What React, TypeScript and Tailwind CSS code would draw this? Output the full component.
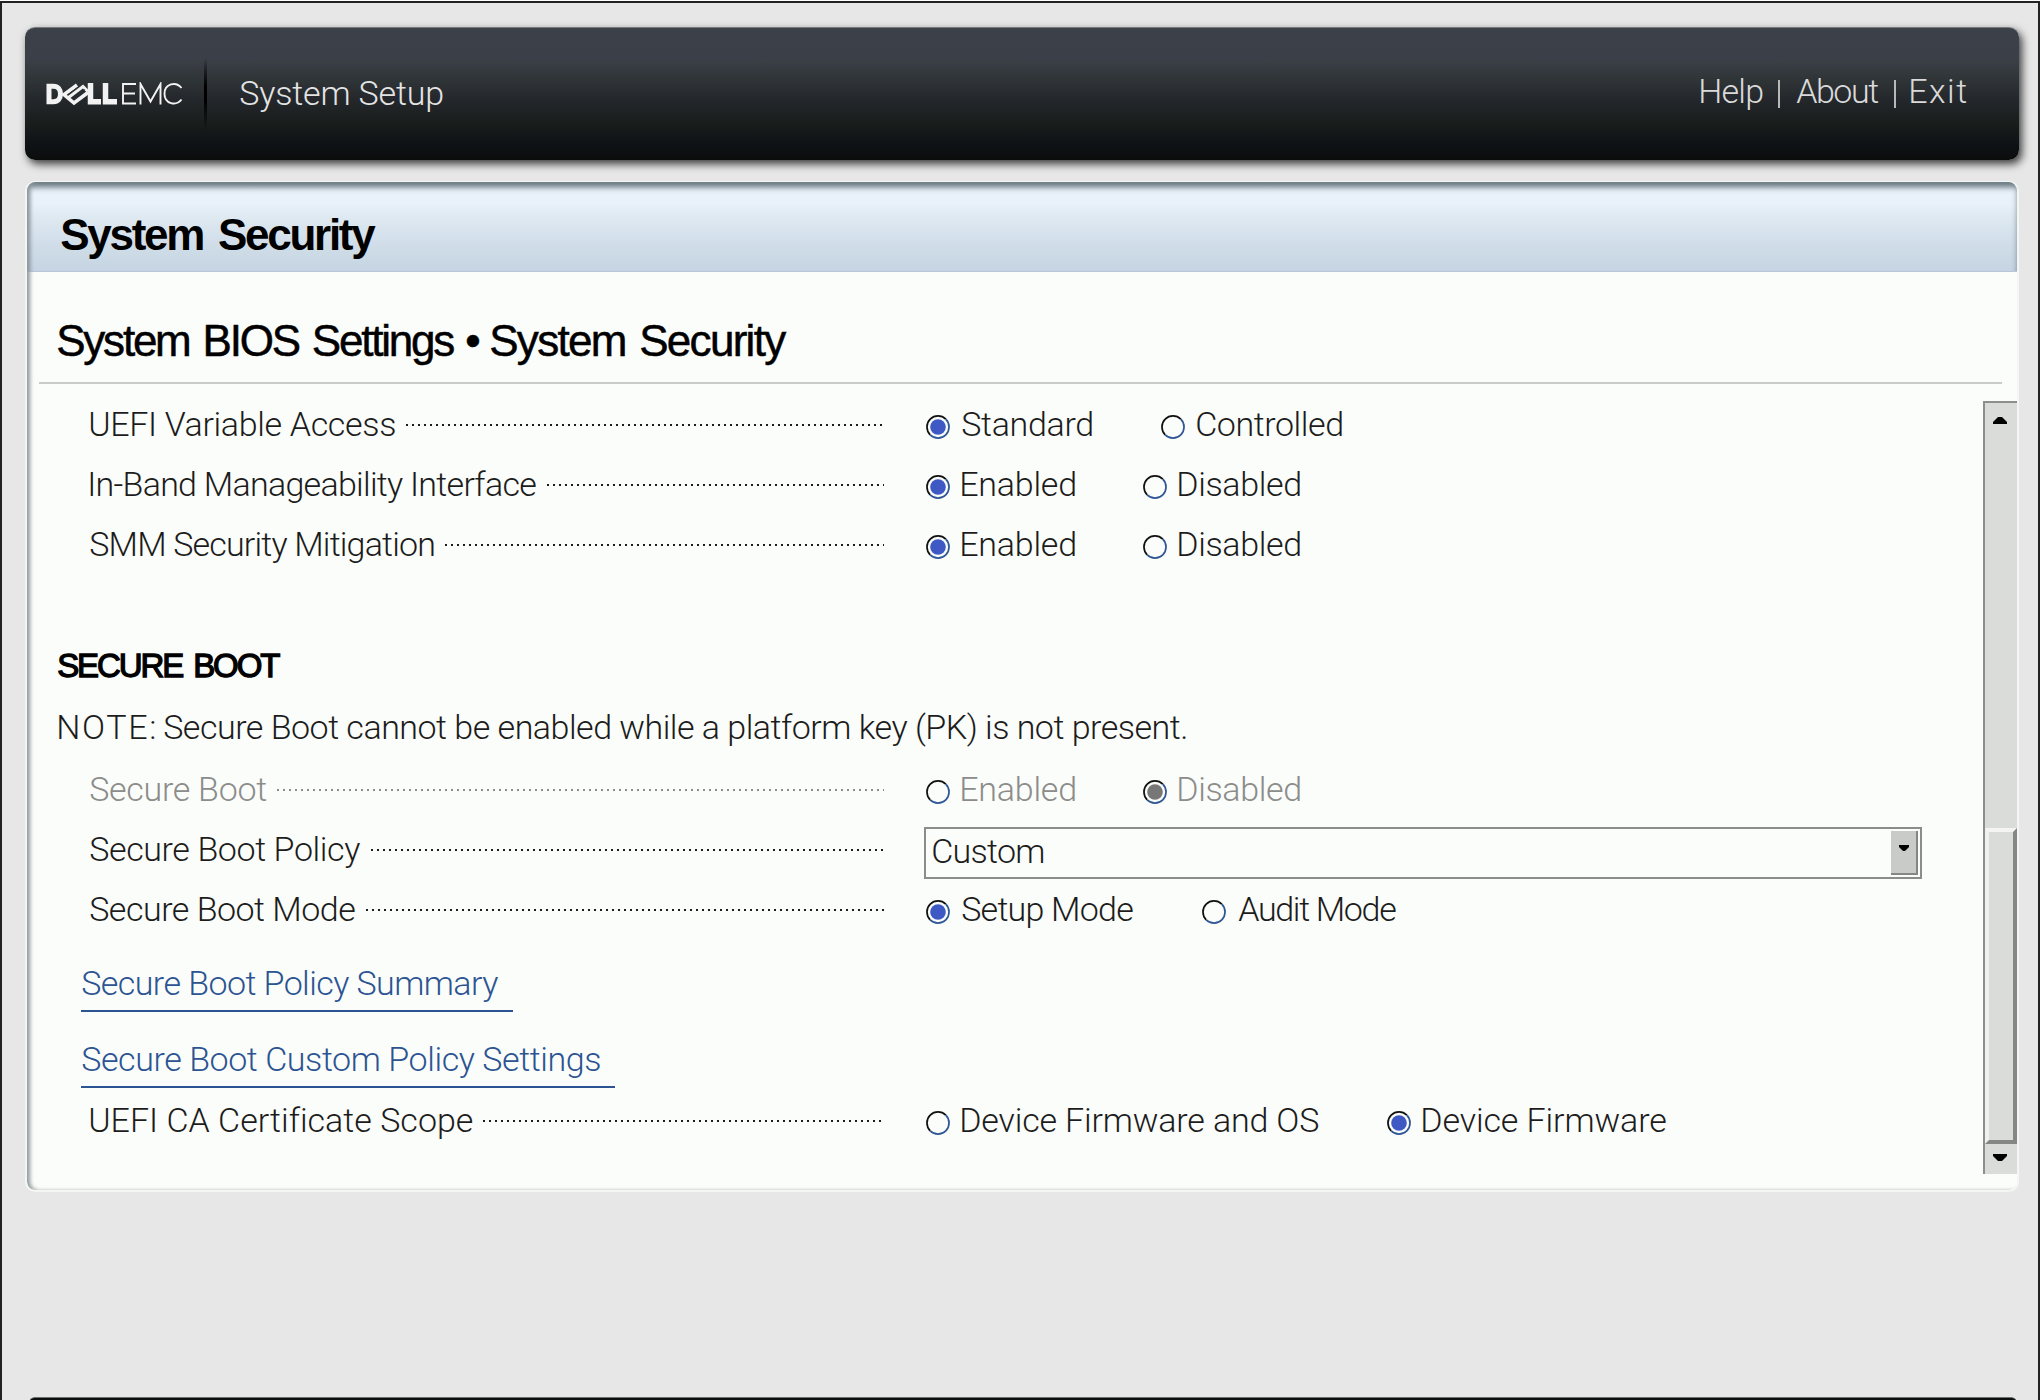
import { useLayoutEffect, useRef } from "react";

type FitProps = { children: string; w: number; className?: string };

/** Text whose letter spacing is tuned so the inked glyphs span exactly `w` pixels. */
function Fit({ children, w, className = "" }: FitProps) {
  const ref = useRef<HTMLSpanElement>(null);
  useLayoutEffect(() => {
    const el = ref.current;
    const ctx = document.createElement("canvas").getContext("2d");
    if (!el || !ctx) return;
    const cs = getComputedStyle(el);
    ctx.font = `${cs.fontWeight} ${cs.fontSize} ${cs.fontFamily}`;
    const m = ctx.measureText(children);
    const gaps = children.split(" ").length - 1;
    const ink = m.actualBoundingBoxRight + m.actualBoundingBoxLeft + gaps * (parseFloat(cs.wordSpacing) || 0);
    el.style.letterSpacing = `${(w - ink) / Math.max(1, children.length - 1)}px`;
    el.style.textIndent = `${m.actualBoundingBoxLeft + 0.2}px`;
  }, [children, w]);
  return (
    <span ref={ref} className={`inline-block whitespace-nowrap ${className}`} style={{ width: w }}>
      {children}
    </span>
  );
}

type Option = { text: string; w: number; gap: number; checked?: boolean };

function Radio({ checked, disabled }: { checked?: boolean; disabled?: boolean }) {
  return (
    <svg width="24" height="24" viewBox="0 0 24 24" className="mt-[6px] shrink-0" fill="none" strokeWidth="1.7">
      <path d="M4.2 19.8A11 11 0 0 1 19.8 4.2" stroke="#111" />
      <path d="M4.2 19.8A11 11 0 0 0 19.8 4.2" stroke="#2f5796" />
      {checked && <circle cx="12" cy="12" r="7.8" fill={disabled ? "#777" : "#3f59c4"} />}
    </svg>
  );
}

function Row({ label, w, options, disabled, children }: {
  label: string;
  w: number;
  options?: Option[];
  disabled?: boolean;
  children?: React.ReactNode;
}) {
  return (
    <div className={`flex h-[60px] items-center ${disabled ? "text-[#8c8c8a]" : "text-[#1c1c1c]"}`}>
      <div className="flex w-[794px] shrink-0 items-center gap-[11px]">
        <Fit w={w}>{label}</Fit>
        <svg className="mt-[2px] h-[2px] flex-1" preserveAspectRatio="none">
          <line x1="0" y1="1" x2="100%" y2="1" stroke="currentColor" strokeWidth="2" strokeDasharray="2 4" />
        </svg>
      </div>
      <div className="flex w-[42px] shrink-0" />
      {options?.map((o) => (
        <div key={o.text} className="flex items-center gap-3" style={{ marginLeft: o.gap }}>
          <Radio checked={o.checked} disabled={disabled} />
          <Fit w={o.w}>{o.text}</Fit>
        </div>
      ))}
      {children}
    </div>
  );
}

function Link({ text, w, className }: { text: string; w: number; className: string }) {
  return (
    <div className={`ml-[-9px] flex h-[58px] items-center border-b-2 border-[#2c5492] pt-px pl-px text-[#2c5492] ${className}`}>
      <Fit w={w}>{text}</Fit>
    </div>
  );
}

function Logo() {
  return (
    <svg width="140" height="24" viewBox="0 0 140 24" fill="none" stroke="#f2f2f2">
      <path d="M4 4.300h4.500c4.500 0 7 3 7 7.700s-2.500 7.700-7 7.700H4z" strokeWidth="5" />
      <path d="M45.500 1v18.800H56M60.500 1v18.800H72" strokeWidth="5.500" />
      <path d="M32 3 19 12.500 29 21 43 10.500" strokeWidth="3.600" />
      <path d="M23.500 15.500 38 4.500l5 5" strokeWidth="3" />
      <path d="M22.500 13 34.500 4M28 17 40 7.500" stroke="#2c3033" strokeWidth="1" />
      <g strokeWidth="1.900">
        <path d="M91 2H78v19.500h13M78 11.500h12" />
        <path d="M95.500 22.500V2l10 17.500L115.500 2v20.500" />
        <path d="M136.500 6C131-1 119.500 1.500 119.500 11.700S131 24.500 136.500 17.500" />
      </g>
    </svg>
  );
}

function Scrollbar() {
  return (
    <div className="mt-[17px] flex h-[773px] w-[34px] shrink-0 flex-col border-t-2 border-l-2 border-[#8d8f8d] bg-[#dadcd9]">
      <svg width="32" height="425" viewBox="0 0 32 425">
        <path d="M8 21v-2l5-5h4l5 5v2z" />
      </svg>
      <div className="h-[316px] border-t-4 border-r-4 border-b-4 border-l-4 border-t-[#f4f5f3] border-r-[#858785] border-b-[#858785] border-l-[#f0f1ef] bg-[#dadcd9]" />
      <svg width="32" height="30" viewBox="0 0 32 30">
        <path d="M8 10v2l5 5h4l5-5v-2z" />
      </svg>
    </div>
  );
}

const enabledDisabled: Option[] = [
  { text: "Enabled", w: 113, gap: 0, checked: true },
  { text: "Disabled", w: 121, gap: 68 },
];

export default function App() {
  return (
    <div className="flex h-[1400px] w-[2040px] flex-col overflow-hidden bg-white pt-px font-['Roboto','Liberation_Sans',sans-serif] text-[34px] leading-[60px] font-light">
      <div className="flex flex-1 flex-col border-x-2 border-t-2 border-[#222] bg-[#e7e7e7] pt-6 pl-[23px]">
        <header className="flex h-[133px] w-[1994px] shrink-0 items-center rounded-[10px] border-t border-[#777b7d] bg-[linear-gradient(to_bottom,#3b4049_0%,#3b4048_24%,#303538_38%,#23272b_55%,#191d1b_72%,#101417_85%,#0b0d0d_100%)] text-[#e4e4e4] shadow-[3px_4px_8px_rgba(0,0,0,0.75)]">
          <div className="ml-5 flex w-[159px]">
            <Logo />
          </div>
          <div className="h-[72px] w-[3px] bg-[linear-gradient(to_bottom,transparent,#000_40%,#000_60%,transparent)]" />
          <div className="mt-[-2px] ml-[33px]">
            <Fit w={203}>System Setup</Fit>
          </div>
          <nav className="-mt-1.5 mr-[53px] ml-auto flex items-center text-[#dadada]">
            <Fit w={62}>Help</Fit>
            <span className="mt-[5px] mr-4 ml-[15px] h-7 w-[2px] bg-[#b8b8b8]" />
            <Fit w={82}>About</Fit>
            <span className="mt-[5px] mr-[15px] ml-4 h-7 w-[2px] bg-[#b8b8b8]" />
            <Fit w={55}>Exit</Fit>
          </nav>
        </header>
        <main className="mt-[21px] h-[1011px] w-[1994px] shrink-0 overflow-hidden rounded-[10px] border-2 border-t-[1px] border-[#f4f6f4] bg-[#fbfdfa]">
          <div className="relative flex h-full flex-col">
            <div className="pointer-events-none absolute inset-0 rounded-[8px] shadow-[inset_4px_0_4px_-1px_#8d979d]" />
            <div className="flex h-[90px] shrink-0 items-center border-b border-[#b9c6da] bg-[linear-gradient(to_bottom,#ebf2fb_0%,#e8f1f9_25%,#dde8f0_42%,#d3dfeb_65%,#cbdae5_82%,#c6d4e4_100%)] pl-[34px] shadow-[inset_0_6px_6px_-1px_#5f7078]">
              <Fit w={315} className="mt-[16px] font-['Liberation_Sans',sans-serif] text-[44px] font-bold text-black [word-spacing:5px]">
                System Security
              </Fit>
            </div>
            <div className="mr-[15px] ml-[12px] flex h-[112px] shrink-0 items-center border-b-2 border-[#c9cbc9] pl-[19px]">
              <h2 className="mt-[27px] flex font-['Liberation_Sans',sans-serif] text-[44px] font-normal text-black [-webkit-text-stroke:0.5px_#000]">
                <Fit w={396} className="[word-spacing:3px]">
                  System BIOS Settings
                </Fit>
                <Fit w={12} className="ml-[12px]">•</Fit>
                <Fit w={295} className="ml-[13px] [word-spacing:3px]">
                  System Security
                </Fit>
              </h2>
            </div>
            <div className="flex">
              <div className="flex flex-1 flex-col pt-[10px] pl-[63px]">
                <Row label="UEFI Variable Access" w={305} options={[
                  { text: "Standard", w: 130, gap: 0, checked: true },
                  { text: "Controlled", w: 145, gap: 69 },
                ]} />
                <Row label="In-Band Manageability Interface" w={446} options={enabledDisabled} />
                <Row label="SMM Security Mitigation" w={344} options={enabledDisabled} />
                <Fit w={222} className="mt-[62px] ml-[-32px] font-['Liberation_Sans',sans-serif] text-[33px] font-normal text-black [-webkit-text-stroke:1.3px_#000] [word-spacing:4px]">
                  SECURE BOOT
                </Fit>
                <div className="mt-[1px] ml-[-31px] flex text-[#1c1c1c]">
                  <Fit w={95}>NOTE:</Fit>
                  <Fit w={1022} className="ml-[10px]">
                    Secure Boot cannot be enabled while a platform key (PK) is not present.
                  </Fit>
                </div>
                <div className="h-[2px]" />
                <Row label="Secure Boot" w={176} disabled options={[
                  { text: "Enabled", w: 113, gap: 0 },
                  { text: "Disabled", w: 121, gap: 68, checked: true },
                ]} />
                <Row label="Secure Boot Policy" w={270}>
                  <div className="mt-[7px] ml-[-2px] flex h-[52px] w-[998px] shrink-0 items-center justify-between border-2 border-[#8b8d8b] pr-[2px] pl-[7px]">
                    <Fit w={110} className="mt-[-3px]">Custom</Fit>
                    <div className="h-[44px] w-[27px] border-r-2 border-b-2 border-[#858785] bg-[#c8cbc8]">
                      <svg width="25" height="42" viewBox="0 0 25 42">
                        <path d="M8 14h10v2l-4 4h-2l-4-4z" />
                      </svg>
                    </div>
                  </div>
                </Row>
                <Row label="Secure Boot Mode" w={265} options={[
                  { text: "Setup Mode", w: 171, gap: 0, checked: true },
                  { text: "Audit Mode", w: 158, gap: 69 },
                ]} />
                <Link text="Secure Boot Policy Summary" w={416} className="mt-[15px] w-[432px]" />
                <Link text="Secure Boot Custom Policy Settings" w={518} className="mt-[18px] w-[534px]" />
                <div className="h-[2px]" />
                <Row label="UEFI CA Certificate Scope" w={382} options={[
                  { text: "Device Firmware and OS", w: 356, gap: 0 },
                  { text: "Device Firmware", w: 243, gap: 69, checked: true },
                ]} />
              </div>
              <Scrollbar />
            </div>
          </div>
        </main>
        <footer className="mt-[205px] ml-[4px] h-[30px] w-[1988px] shrink-0 rounded-t-[6px] border-t border-[#6b6f6d] bg-[#0b100e]" />
      </div>
    </div>
  );
}
